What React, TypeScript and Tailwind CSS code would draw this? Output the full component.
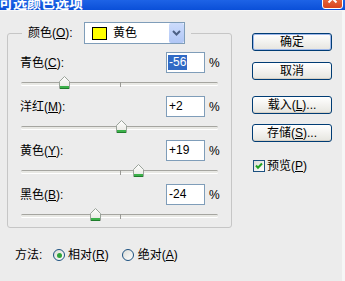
import React from "react";

const FONT = { fontFamily: '"Liberation Sans", "Noto Sans CJK SC", sans-serif' };

const rows = [
  { name: "青色", key: "C", value: "-56", v: -56, selected: true },
  { name: "洋红", key: "M", value: "+2", v: 2, selected: false },
  { name: "黄色", key: "Y", value: "+19", v: 19, selected: false },
  { name: "黑色", key: "B", value: "-24", v: -24, selected: false },
];

function Thumb({ left }: { left: number }) {
  return (
    <svg
      className="absolute top-[3px]"
      style={{ left }}
      width="11"
      height="13"
      viewBox="0 0 11 13"
    >
      <defs>
        <linearGradient id="tg" x1="0" y1="0" x2="0" y2="1">
          <stop offset="0" stopColor="#ffffff" />
          <stop offset="1" stopColor="#e6e6e0" />
        </linearGradient>
      </defs>
      <path d="M0.5 5.5 L5.5 0.5 L10.5 5.5 L10.5 12.5 L0.5 12.5 Z" fill="url(#tg)" stroke="#9aa39a" />
      <rect x="1" y="10" width="9" height="2" fill="#3cb04a" />
      <rect x="1" y="12" width="9" height="1" fill="#1f7d2c" />
    </svg>
  );
}

function Button({ children, def }: { children: React.ReactNode; def?: boolean }) {
  return (
    <div
      className={
        "h-[18px] w-[80px] rounded-[3px] border border-[#003c74] bg-gradient-to-b from-[#ffffff] to-[#e6e5df] flex items-center justify-center text-[12px] leading-[14px] text-black " +
        (def ? "shadow-[inset_0_0_0_1px_#9db7ea]" : "shadow-[inset_0_-1px_0_0_#d6d0c5]")
      }
    >
      {children}
    </div>
  );
}

function Radio({ checked }: { checked?: boolean }) {
  return (
    <div className="w-[12px] h-[12px] rounded-full border border-[#1c5180] bg-gradient-to-br from-[#dcdcd6] to-[#ffffff] flex items-center justify-center">
      {checked && <div className="w-[5px] h-[5px] rounded-full bg-[#2ea43a]" />}
    </div>
  );
}

export default function App() {
  return (
    <div className="w-[345px] h-[281px] bg-[#ececec] overflow-hidden flex flex-col text-black text-[12px]" style={FONT}>
      {/* title bar */}
      <div className="h-[10px] shrink-0 overflow-hidden flex justify-between bg-gradient-to-b from-[#1d63e6] to-[#0a4fd8]">
        <div
          className="mt-[-5px] ml-[-1px] text-white font-bold text-[14px] leading-[14px] whitespace-nowrap"
          style={{ fontFamily: '"Noto Sans CJK SC", sans-serif' }}
        >
          可选颜色选项
        </div>
        <div className="mt-[-12px] mr-[2px] w-[21px] h-[21px] rounded-[3px] border border-white bg-gradient-to-b from-[#f08a5a] to-[#d9431c] flex items-center justify-center">
          <svg width="11" height="11" viewBox="0 0 11 11">
            <path d="M1.5 1.5 L9.5 9.5 M9.5 1.5 L1.5 9.5" stroke="#ffffff" strokeWidth="2" />
          </svg>
        </div>
      </div>
      <div className="h-[1px] shrink-0 bg-[#f7f7f7]" />

      <div className="flex-1 flex flex-col border-r-[3px] border-[#f6f6f6]">
        <div className="flex items-start pl-[7px]">
          {/* group box */}
          <fieldset className="mt-[11px] w-[225px] h-[206px] border border-[#c6c6c6] rounded-[3px] pl-[12px] pr-[11px] pt-[8px]">
            <legend className="ml-[2px] px-[6px]">
              <div className="flex items-center h-[22px]">
                <span className="w-[56px] leading-[14px]">
                  颜色(<u>O</u>):
                </span>
                <div className="w-[101px] h-[22px] border border-[#7f9db9] bg-white flex items-center">
                  <div className="ml-[7px] w-[15px] h-[13px] border border-black bg-[#ffff00]" />
                  <span className="ml-[6px] flex-1 leading-[14px]">黄色</span>
                  <div className="w-[15px] h-[20px] rounded-[2px] bg-gradient-to-b from-[#cddcfc] to-[#b0c6f5] flex items-center justify-center">
                    <svg width="9" height="6" viewBox="0 0 9 6">
                      <path d="M1 1 L4.5 4.5 L8 1" fill="none" stroke="#4d6185" strokeWidth="2" />
                    </svg>
                  </div>
                </div>
              </div>
            </legend>

            <div className="flex flex-col gap-[5px]">
              {rows.map((r) => (
                <div key={r.key}>
                  <div className="flex items-center h-[21px]">
                    <span className="flex-1 leading-[14px]">
                      {r.name}(<u>{r.key}</u>):
                    </span>
                    <div className="w-[39px] h-[21px] border border-[#7f9db9] bg-white flex items-center pl-[1px]">
                      <span
                        className={
                          "leading-[15px] px-[1px] " + (r.selected ? "bg-[#316ac5] text-white" : "text-black")
                        }
                      >
                        {r.value}
                      </span>
                    </div>
                    <span className="ml-[4px] w-[11px] leading-[14px]">%</span>
                  </div>
                  <div className="relative h-[18px]">
                    <div className="absolute left-[1px] right-[2px] top-[9px] h-[3px] rounded-[2px] border-t border-[#a5a5a0] bg-[#e8e8e4] shadow-[0_1px_0_0_#ffffff]" />
                    <div className="absolute left-[100px] top-[9px] w-[1px] h-[5px] bg-[#9a9a96]" />
                    <Thumb left={99.5 + r.v * 0.985 - 5.5} />
                  </div>
                </div>
              ))}
            </div>
          </fieldset>

          {/* right column */}
          <div className="ml-[20px] mt-[22px] flex flex-col">
            <Button def>确定</Button>
            <div className="h-[11px]" />
            <Button>取消</Button>
            <div className="h-[16px]" />
            <Button>
              载入(<u>L</u>)...
            </Button>
            <div className="h-[10px]" />
            <Button>
              存储(<u>S</u>)...
            </Button>
            <div className="h-[17px]" />
            <div className="flex items-center ml-[1px]">
              <div className="w-[12px] h-[12px] border border-[#1c5180] bg-gradient-to-br from-[#dcdcd6] to-[#ffffff] flex items-center justify-center">
                <svg width="8" height="8" viewBox="0 0 8 8">
                  <path d="M1 3.5 L3 5.8 L7 1.5" fill="none" stroke="#21a121" strokeWidth="2" />
                </svg>
              </div>
              <span className="ml-[2px] leading-[14px]">
                预览(<u>P</u>)
              </span>
            </div>
          </div>
        </div>

        {/* method row */}
        <div className="mt-[19px] pl-[15px] flex items-center h-[16px]">
          <span className="w-[38px] leading-[14px]">方法:</span>
          <Radio checked />
          <span className="ml-[3px] leading-[14px]">
            相对(<u>R</u>)
          </span>
          <div className="ml-[13px]">
            <Radio />
          </div>
          <span className="ml-[4px] leading-[14px]">
            绝对(<u>A</u>)
          </span>
        </div>
      </div>
    </div>
  );
}
